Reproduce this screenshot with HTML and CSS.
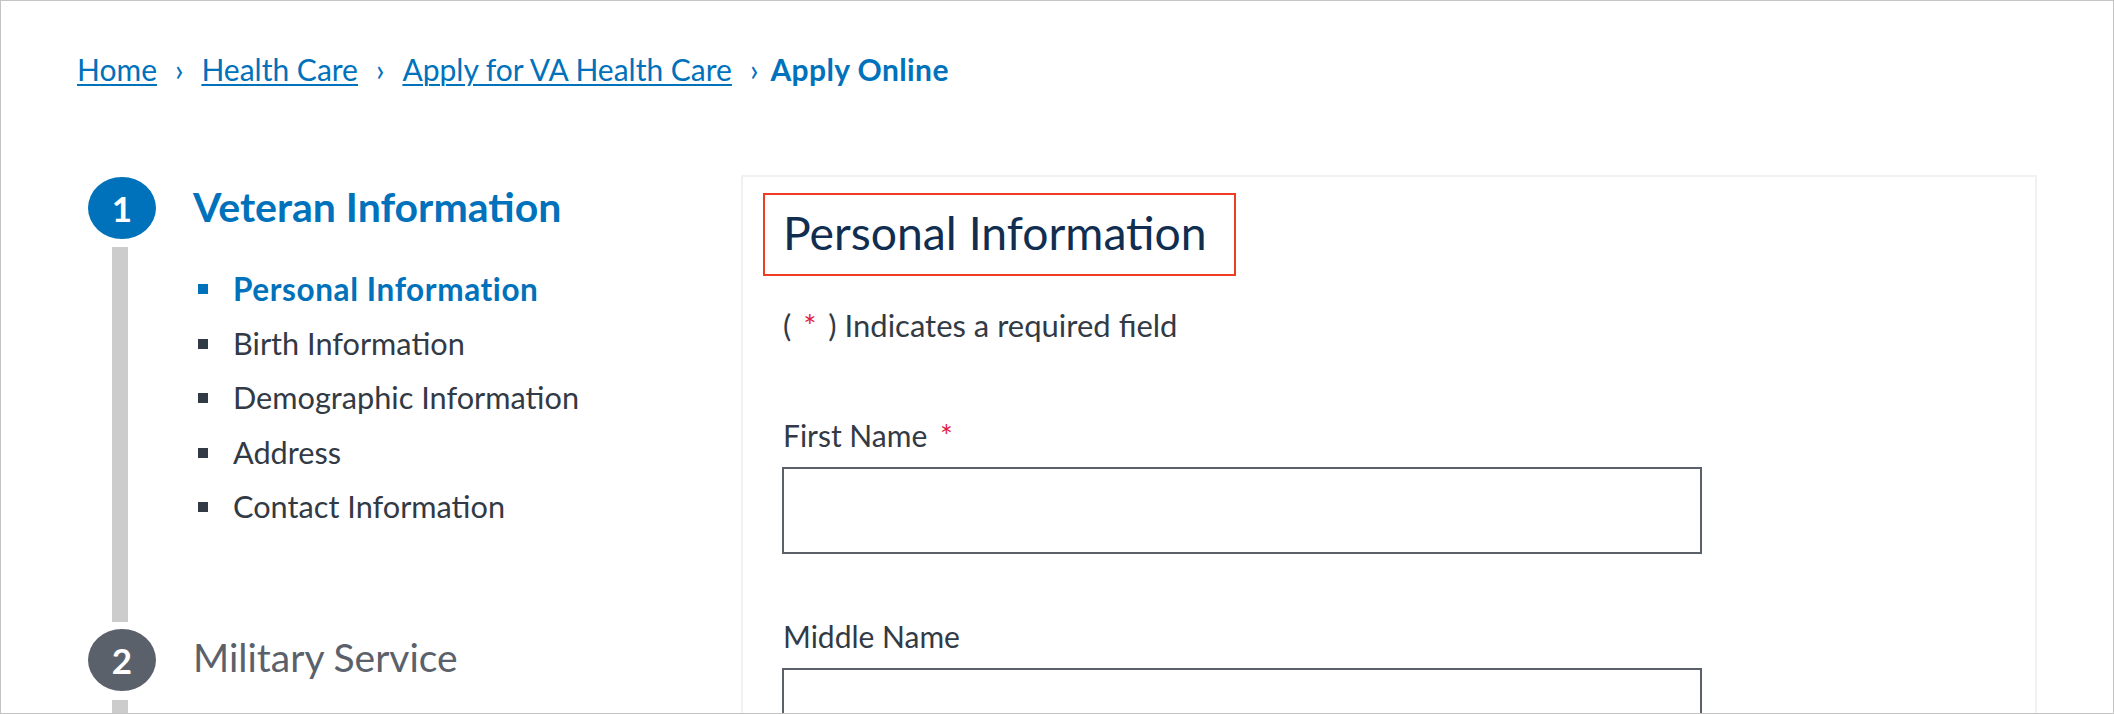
FILE: index.html
```html
<!DOCTYPE html>
<html lang="en">
<head>
<meta charset="utf-8">
<title>Apply Online - VA Health Care</title>
<link rel="stylesheet" href="styles.css">
</head>
<body>
<div class="frame">
  <nav class="breadcrumb">
    <a href="#">Home</a><span class="sep">›</span><a href="#">Health Care</a><span class="sep">›</span><a href="#">Apply for VA Health Care</a><span class="sep">›</span><span class="current">Apply Online</span>
  </nav>
  <div class="main">
    <aside class="sidebar">
      <div class="step step-active">
        <div class="rail">
          <div class="circle">1</div>
          <div class="line"></div>
        </div>
        <div class="step-body">
          <div class="step-title">Veteran Information</div>
          <ul class="substeps">
            <li class="current">Personal Information</li>
            <li>Birth Information</li>
            <li>Demographic Information</li>
            <li>Address</li>
            <li>Contact Information</li>
          </ul>
        </div>
      </div>
      <div class="step step-next">
        <div class="rail">
          <div class="circle">2</div>
          <div class="line"></div>
        </div>
        <div class="step-body">
          <div class="step-title">Military Service</div>
        </div>
      </div>
    </aside>
    <section class="card">
      <div class="annot"><h2 class="card-title">Personal Information</h2></div>
      <p class="req">( <span class="star star-note">*</span> ) Indicates a required field</p>
      <div class="field field-first">
        <label class="label" for="first">First Name <span class="star">*</span></label>
        <input class="input" id="first" type="text">
      </div>
      <div class="field">
        <label class="label" for="middle">Middle Name</label>
        <input class="input" id="middle" type="text">
      </div>
    </section>
  </div>
</div>
</body>
</html>
```

FILE: styles.css
```css
* { box-sizing: border-box; }
html, body { margin: 0; padding: 0; background: #fff; }
body {
  font-family: "Lato", "Liberation Sans", sans-serif;
  color: #323a45;
}
.frame {
  width: 2114px;
  height: 714px;
  border: 1px solid #c4c4c4;
  overflow: hidden;
  background: #fff;
}

/* Breadcrumb */
.breadcrumb {
  margin-top: 48px;
  padding-left: 76px;
  font-size: 30px;
  line-height: 40px;
  display: flex;
  align-items: baseline;
  color: #0071bb;
}
.breadcrumb a {
  color: #0071bb;
  text-decoration: underline;
  text-decoration-thickness: 2px;
  text-underline-offset: 3px;
}
.breadcrumb .sep {
  margin: 0 18px;
  color: #0071bb;
}
.breadcrumb .sep:nth-last-child(2) { margin-right: 12px; }
.breadcrumb .current {
  font-weight: 700;
  letter-spacing: 0.4px;
}

/* Main */
.main {
  margin-top: 86px;
  padding-left: 87px;
  display: flex;
  align-items: flex-start;
}
.sidebar {
  width: 653px;
  flex-shrink: 0;
  padding-top: 2px;
}
.step {
  display: flex;
  align-items: stretch;
}
.rail {
  width: 68px;
  flex-shrink: 0;
  display: flex;
  flex-direction: column;
  align-items: center;
}
.circle {
  width: 68px;
  height: 62px;
  border-radius: 50%;
  color: #fff;
  font-weight: 700;
  font-size: 35px;
  display: flex;
  align-items: center;
  justify-content: center;
}
.step-active .circle { background: #0071bb; }
.step-next .circle { background: #5b616b; }
.line {
  width: 16px;
  flex: 1;
  background: #cccccc;
  margin: 8px 4px 7px 0;
}
.step-next .line { flex: none; height: 60px; margin-top: 9px; }
.step-body {
  margin-left: 37px;
}
.step-active .step-body { padding-bottom: 94px; }
.step-title {
  font-size: 41px;
  line-height: 59px;
}
.step-active .step-title { color: #0071bb; font-weight: 700; }
.step-next .step-title {
  color: #5b616b;
  font-size: 39px;
  line-height: 57px;
}

.substeps {
  list-style: none;
  margin: 26px 0 0;
  padding: 0;
  font-size: 30.7px;
  line-height: 54.5px;
}
.substeps li {
  display: flex;
  align-items: center;
}
.substeps li::before {
  content: "";
  width: 10px;
  height: 10px;
  background: #323a45;
  margin-left: 5px;
  margin-right: 25px;
  flex-shrink: 0;
}
.substeps li.current {
  color: #0071bb;
  font-weight: 700;
  font-size: 31.5px;
  letter-spacing: 0.6px;
}
.substeps li.current::before { background: #0071bb; }

/* Card */
.card {
  width: 1296px;
  flex-shrink: 0;
  border: 2px solid #f1f1f1;
  padding: 16px 40px 0;
}
.annot {
  width: 473px;
  height: 83px;
  margin-left: -20px;
  border: 2px solid #f03c24;
  padding-left: 18px;
}
.card-title {
  margin: 0;
  font-size: 46.3px;
  font-weight: 400;
  line-height: 75px;
  color: #112e51;
}
.req {
  margin: 29px 0 0;
  font-size: 31px;
  line-height: 40px;
}
.star { color: #e31c3d; }
.star-note { margin: 0 4px; }
.field { margin-top: 62px; }
.field-first { margin-top: 70px; }
.label {
  display: block;
  font-size: 30px;
  line-height: 40px;
  margin-bottom: 12px;
}
.label .star { margin-left: 5px; }
.input {
  display: block;
  width: 920px;
  height: 87px;
  margin: 0 0 0 -1px;
  border: 2px solid #5b616b;
  border-radius: 0;
  background: #fff;
  font: inherit;
  padding: 0 12px;
}
```
